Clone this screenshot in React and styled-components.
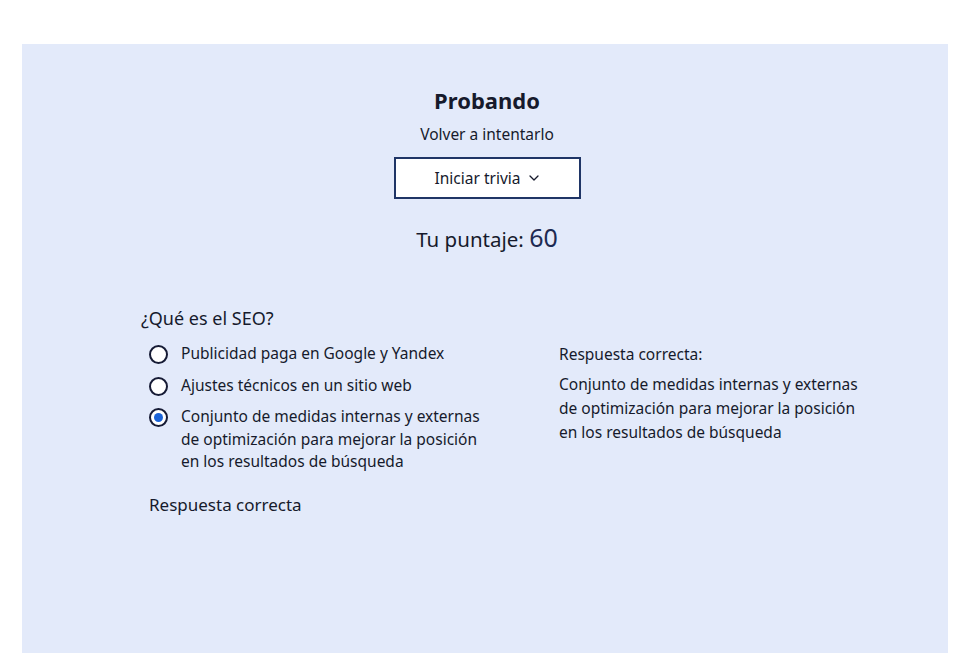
import React from 'react';
import styled, { createGlobalStyle } from 'styled-components';

const GlobalStyle = createGlobalStyle`
  html, body {
    margin: 0;
    padding: 0;
    background: #ffffff;
  }
  body {
    font-family: "Noto Sans", "Open Sans", sans-serif;
    color: #161a2c;
  }
`;

const Page = styled.div`
  padding: 44px 32px 0 22px;
  height: 653px;
  box-sizing: border-box;
  overflow: hidden;
`;

const Panel = styled.section`
  height: 620px;
  background: #e3eafa;
  padding: 42px 0 0 119px;
  box-sizing: border-box;
`;

const Header = styled.header`
  display: flex;
  flex-direction: column;
  align-items: center;
  margin-left: -115px;
`;

const Title = styled.h1`
  margin: 0;
  font-size: 22px;
  font-weight: 700;
  line-height: 28px;
`;

const Subtitle = styled.p`
  margin: 9px 0 0;
  font-size: 15.5px;
  line-height: 22px;
`;

const StartButton = styled.button`
  margin-top: 12px;
  width: 187px;
  height: 42px;
  display: flex;
  align-items: center;
  justify-content: center;
  gap: 9px;
  background: #ffffff;
  border: 2px solid #1f3566;
  font-family: inherit;
  font-size: 15.5px;
  color: #161a2c;
  cursor: pointer;
`;

const Score = styled.p`
  margin: 23px 0 0;
  font-size: 20.5px;
  line-height: 30px;
`;

const ScoreValue = styled.span`
  font-size: 25px;
  color: #1d2a52;
`;

const Quiz = styled.div`
  margin-top: 52px;
  display: grid;
  grid-template-columns: 418px 330px;
`;

const Question = styled.h2`
  margin: 0 0 12px;
  font-size: 18px;
  font-weight: 400;
  line-height: 24px;
`;

const Options = styled.ul`
  list-style: none;
  margin: 0;
  padding: 0 0 0 8px;
  display: flex;
  flex-direction: column;
  gap: 9px;
`;

const Option = styled.li`
  display: flex;
  align-items: flex-start;
  gap: 13px;
  font-size: 15.5px;
  line-height: 22.5px;
`;

const OptionText = styled.span`
  max-width: 300px;
`;

const Radio = styled.span`
  flex: none;
  width: 19px;
  height: 19px;
  margin-top: 3px;
  border-radius: 50%;
  border: 2px solid #161b35;
  box-sizing: border-box;
  background: #ffffff;
  display: flex;
  align-items: center;
  justify-content: center;

  &::after {
    content: '';
    display: ${({ checked }) => (checked ? 'block' : 'none')};
    width: 9px;
    height: 9px;
    border-radius: 50%;
    background: #1a63d8;
  }
`;

const Feedback = styled.p`
  margin: 20px 0 0 8px;
  font-size: 17px;
  line-height: 24px;
`;

const Answer = styled.div`
  padding-top: 36px;
`;

const AnswerLabel = styled.p`
  margin: 0 0 6px;
  font-size: 15.5px;
  line-height: 24px;
`;

const AnswerText = styled.p`
  margin: 0;
  font-size: 15.5px;
  line-height: 24px;
  max-width: 314px;
`;

const Chevron = () => (
  <svg width="10" height="6" viewBox="0 0 10 6" fill="none">
    <path d="M1 1l4 4 4-4" stroke="#161a2c" strokeWidth="1.3" strokeLinecap="round" strokeLinejoin="round" />
  </svg>
);

const options = [
  { text: 'Publicidad paga en Google y Yandex', checked: false },
  { text: 'Ajustes técnicos en un sitio web', checked: false },
  {
    text: 'Conjunto de medidas internas y externas de optimización para mejorar la posición en los resultados de búsqueda',
    checked: true,
  },
];

export default function App() {
  return (
    <>
      <GlobalStyle />
      <Page>
        <Panel>
          <Header>
            <Title>Probando</Title>
            <Subtitle>Volver a intentarlo</Subtitle>
            <StartButton>
              Iniciar trivia
              <Chevron />
            </StartButton>
            <Score>
              Tu puntaje: <ScoreValue>60</ScoreValue>
            </Score>
          </Header>
          <Quiz>
            <div>
              <Question>¿Qué es el SEO?</Question>
              <Options>
                {options.map((o) => (
                  <Option key={o.text}>
                    <Radio checked={o.checked} />
                    <OptionText>{o.text}</OptionText>
                  </Option>
                ))}
              </Options>
              <Feedback>Respuesta correcta</Feedback>
            </div>
            <Answer>
              <AnswerLabel>Respuesta correcta:</AnswerLabel>
              <AnswerText>
                Conjunto de medidas internas y externas de optimización para mejorar la posición en los resultados de búsqueda
              </AnswerText>
            </Answer>
          </Quiz>
        </Panel>
      </Page>
    </>
  );
}
